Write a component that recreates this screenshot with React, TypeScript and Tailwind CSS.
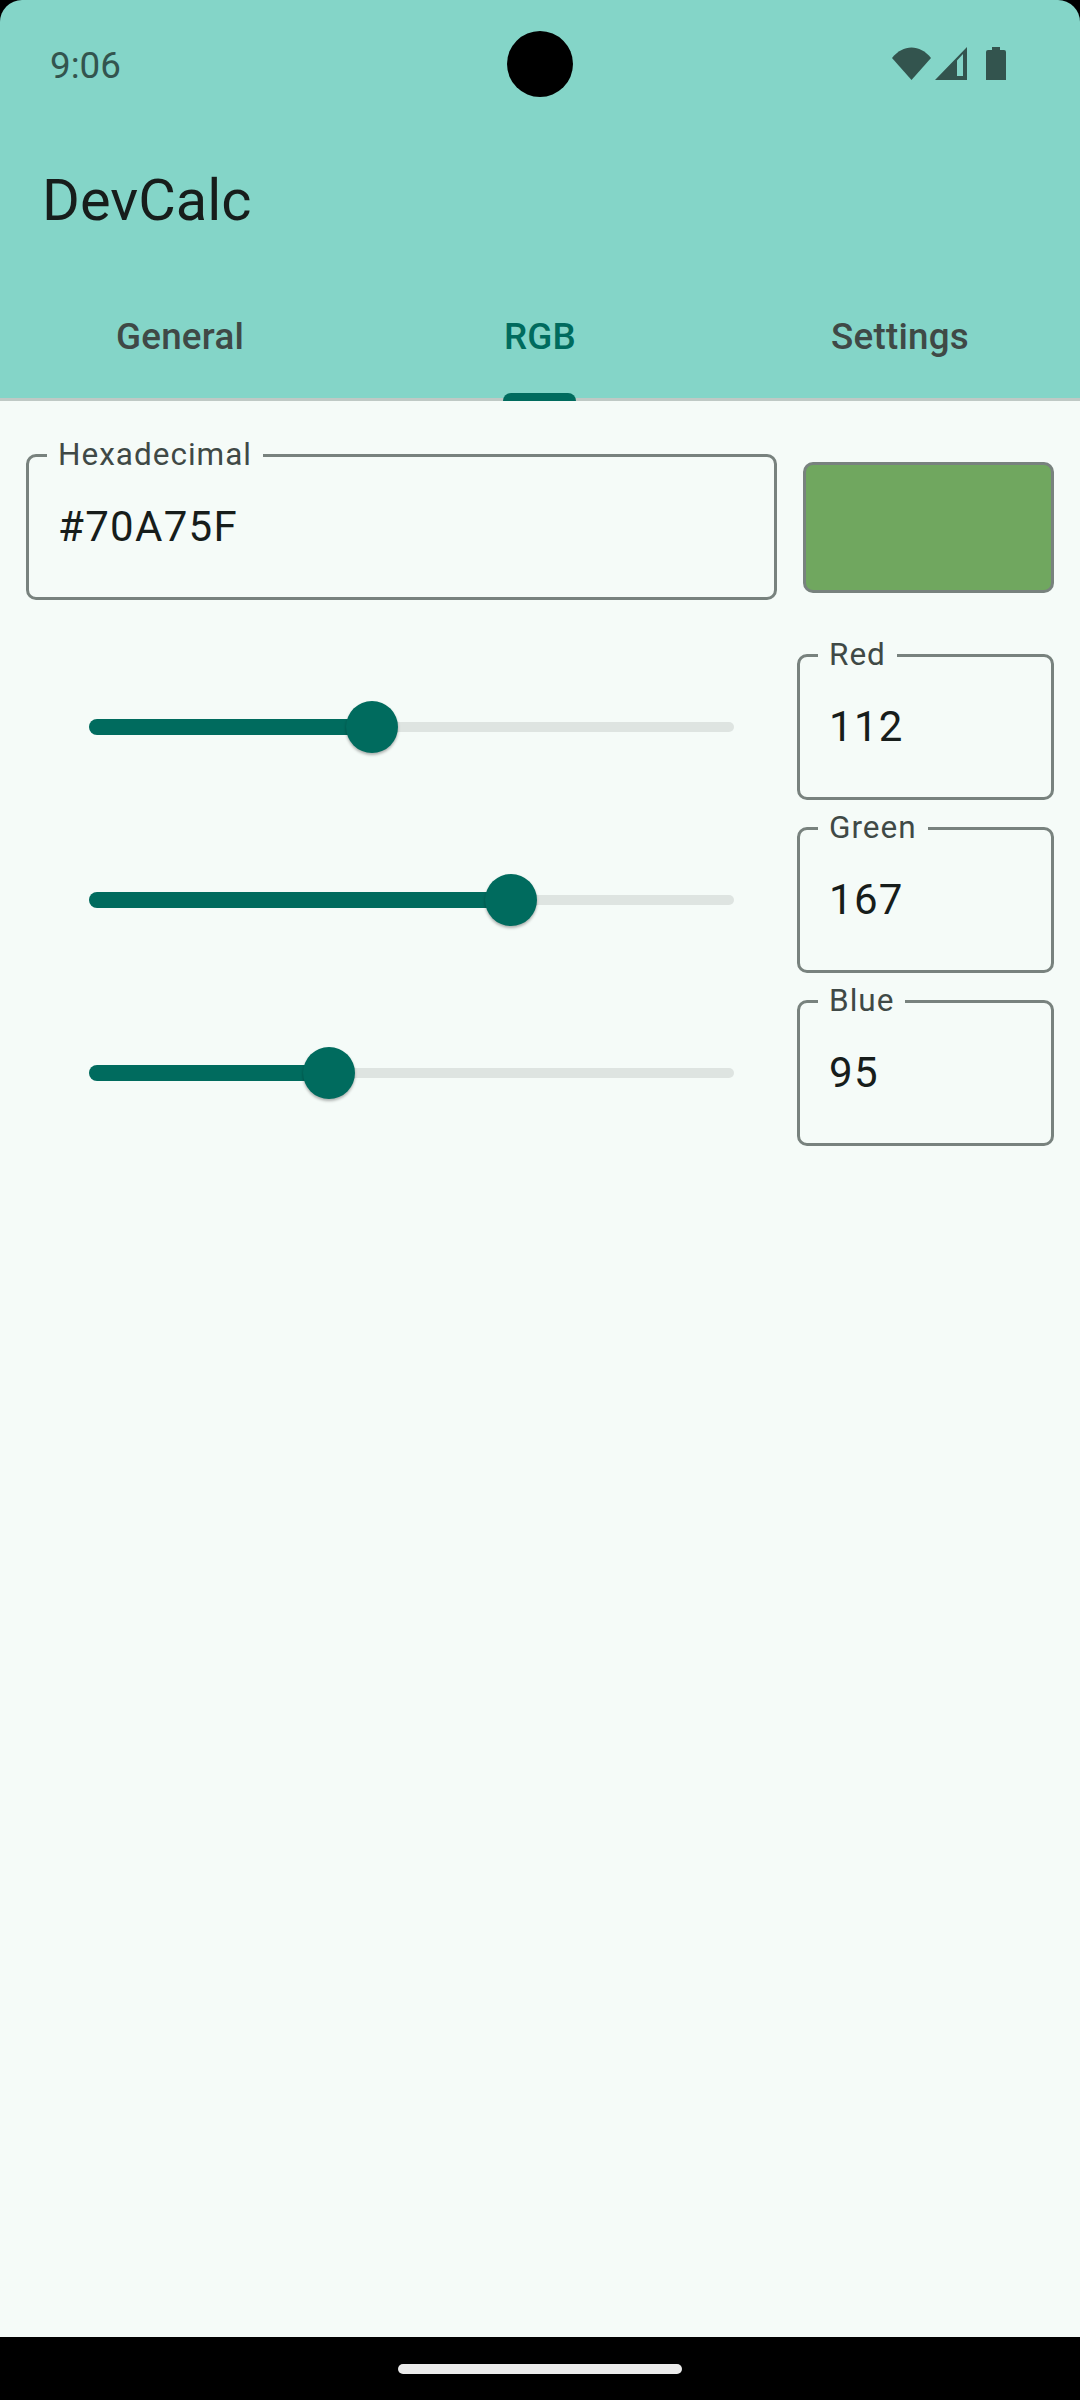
import React from 'react';

const font = "font-['Roboto',sans-serif]";

const sliders = [
  { label: 'Red', value: '112', percent: 43.9 },
  { label: 'Green', value: '167', percent: 65.5 },
  { label: 'Blue', value: '95', percent: 37.2 },
];

const Field: React.FC<{ label: string; value: string; className: string }> = ({ label, value, className }) => (
  <div className={`relative h-[146px] rounded-[10px] border-[3px] border-[#78827e] ${className}`}>
    <span className="absolute left-[18px] top-[-24px] bg-[#f5fbf8] px-[11px] text-[31.5px] leading-[44px] tracking-[1px] text-[#3f4946]">
      {label}
    </span>
    <div className="pl-[29px] pt-[42px] text-[42px] leading-[56px] tracking-[1.3px] text-[#171d1b]">{value}</div>
  </div>
);

const Slider: React.FC<{ percent: number }> = ({ percent }) => (
  <div className="relative flex h-[52px] flex-1 items-center">
    <div className="h-[10px] w-full rounded-full bg-[#dee4e1]" />
    <div
      className="absolute left-0 top-[18px] h-[16px] rounded-full bg-[#006b5e]"
      style={{ width: `${percent}%` }}
    />
    <div
      className="absolute top-0 ml-[-26px] h-[52px] w-[52px] rounded-full bg-[#006b5e] shadow-[0_2px_3px_rgba(0,0,0,0.3)]"
      style={{ left: `${percent}%` }}
    />
  </div>
);

const StatusIcons = () => (
  <div className="flex items-center">
    <svg width="39" height="33" viewBox="0 0 39 33" className="fill-[#33544e]">
      <path d="M0 11 C11 -3 28 -3 39 11 L19.5 33 Z" />
    </svg>
    <svg width="32" height="33" viewBox="0 0 32 33" className="ml-[4px] fill-[#33544e]">
      <path fillRule="evenodd" d="M32 0 V33 H0 Z M28 7 L22 13.5 V29 H28 Z" />
    </svg>
    <svg width="20" height="33" viewBox="0 0 20 33" className="ml-[19px] fill-[#33544e]">
      <path d="M6 0 H14 V3 H18 Q20 3 20 5 V33 H0 V5 Q0 3 2 3 H6 Z" />
    </svg>
  </div>
);

const App: React.FC = () => {
  return (
    <div className={`flex h-[2400px] w-[1080px] flex-col bg-black ${font}`}>
      <header className="relative h-[398px] shrink-0 rounded-t-[22px] bg-[#84d5c8]">
        <div className="flex h-[165px] items-start justify-between pl-[50px] pr-[74px] pt-[47px]">
          <span className="text-[36.75px] leading-[38px] text-[#33544e]">9:06</span>
          <StatusIcons />
        </div>
        {/* camera cutout */}
        <div className="absolute left-[507px] top-[31px] h-[66px] w-[66px] rounded-full bg-black" />
        <h1 className="pl-[42px] text-[57.75px] leading-[70px] text-[#171d1b]">DevCalc</h1>
        <nav className="mt-[77px] grid grid-cols-3 text-center text-[36.75px] font-medium leading-[50px] tracking-[0.26px] text-[#3f4946]">
          <span>General</span>
          <span className="text-[#006b5e]">RGB</span>
          <span>Settings</span>
        </nav>
      </header>

      <div className="h-[3px] shrink-0 bg-[#bfc9c5]" />

      <main className="relative flex-1 bg-[#f5fbf8] px-[26px] pt-[53px]">
        <div className="absolute left-[503px] top-[-8px] h-[8px] w-[73px] rounded-t-[8px] bg-[#006b5e]" />
        <div className="flex items-center">
          <Field label="Hexadecimal" value="#70A75F" className="w-[751px]" />
          <div className="ml-[26px] h-[131px] flex-1 rounded-[10px] border-[3px] border-[#78827e] bg-[#70a75f]" />
        </div>

        <div className="mt-[54px] flex flex-col gap-[27px]">
          {sliders.map((s) => (
            <div key={s.label} className="flex items-center">
              <div className="ml-[63px] flex flex-1 items-center">
                <Slider percent={s.percent} />
              </div>
              <Field label={s.label} value={s.value} className="ml-[63px] w-[257px]" />
            </div>
          ))}
        </div>
      </main>

      <footer className="flex h-[63px] shrink-0 items-center justify-center">
        <div className="h-[10px] w-[284px] rounded-full bg-[#ebebeb]" />
      </footer>
    </div>
  );
};

export default App;
